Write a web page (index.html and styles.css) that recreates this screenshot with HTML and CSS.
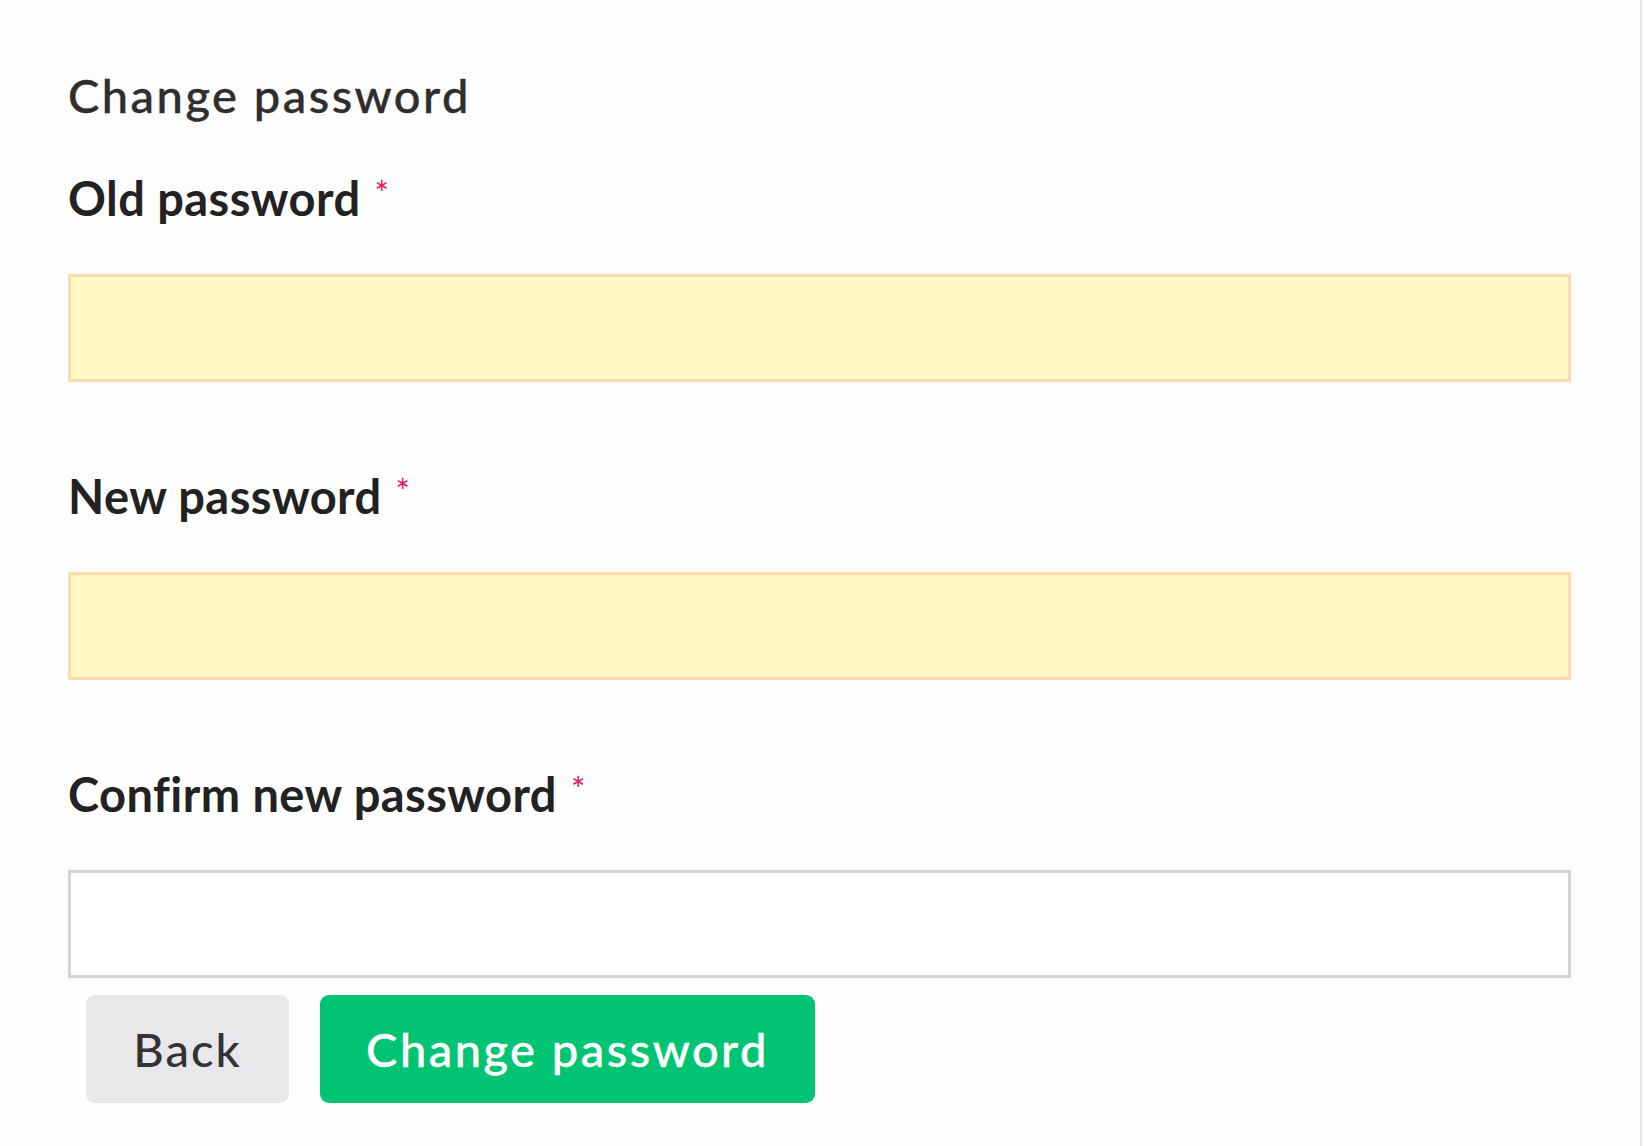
FILE: index.html
```html
<!DOCTYPE html>
<html lang="en">
<head>
<meta charset="utf-8">
<title>Change password</title>
<link rel="stylesheet" href="styles.css">
</head>
<body>
<main class="page">
  <form class="form">
    <h1 class="title">Change password</h1>
    <div class="field">
      <label class="label" for="old">Old password<span class="req">*</span></label>
      <input class="input input-filled" id="old" type="password">
    </div>
    <div class="field">
      <label class="label" for="new">New password<span class="req">*</span></label>
      <input class="input input-filled" id="new" type="password">
    </div>
    <div class="field field-last">
      <label class="label" for="confirm">Confirm new password<span class="req">*</span></label>
      <input class="input" id="confirm" type="password">
    </div>
    <div class="actions">
      <button type="button" class="btn btn-back">Back</button>
      <button type="submit" class="btn btn-primary">Change password</button>
    </div>
  </form>
</main>
</body>
</html>
```
FILE: styles.css
```css
html, body {
  margin: 0;
  padding: 0;
  background: #fdfdfd;
}
body {
  font-family: Lato, "Noto Sans", sans-serif;
  color: #333;
}
.page {
  width: 1642px;
  height: 1146px;
  box-sizing: border-box;
  border-right: 2px solid #e8e8e8;
  padding: 69px 0 0 68px;
}
.form {
  width: 1503px;
  display: flex;
  flex-direction: column;
}
.title {
  margin: 0 0 51px 0;
  font-size: 47px;
  line-height: 52px;
  font-weight: 500;
  letter-spacing: 2.5px;
  color: #2e2e2e;
  -webkit-text-stroke: 0.4px #2e2e2e;
}
.field {
  display: flex;
  flex-direction: column;
  gap: 50px;
  margin-bottom: 88px;
}
.field-last {
  margin-bottom: 17px;
}
.label {
  font-size: 47px;
  line-height: 52px;
  font-weight: 700;
  letter-spacing: 0.45px;
  color: #222;
}
.req {
  color: #e5195f;
  font-weight: 400;
  font-size: 34px;
  line-height: 0;
  vertical-align: 10px;
  margin-left: 14px;
}
.input {
  display: block;
  box-sizing: border-box;
  width: 100%;
  height: 108px;
  margin: 0;
  border: 3px solid #d4d4d4;
  background: #ffffff;
  font: inherit;
  outline: none;
}
.input-filled {
  background: #fff8c2;
  border-color: #fcdcac;
}
.actions {
  display: flex;
  gap: 31px;
  padding-left: 18px;
}
.btn {
  height: 108px;
  border: none;
  border-radius: 9px;
  font-family: Lato, "Noto Sans", sans-serif;
  font-size: 47px;
  font-weight: 500;
  letter-spacing: 2.5px;
  padding: 0;
  cursor: pointer;
}
.btn-back {
  width: 203px;
  background: #e8e8ea;
  color: #333;
  letter-spacing: 2px;
}
.btn-primary {
  width: 495px;
  background: #00c473;
  color: #fff;
  -webkit-text-stroke: 0.4px #fff;
}
```
